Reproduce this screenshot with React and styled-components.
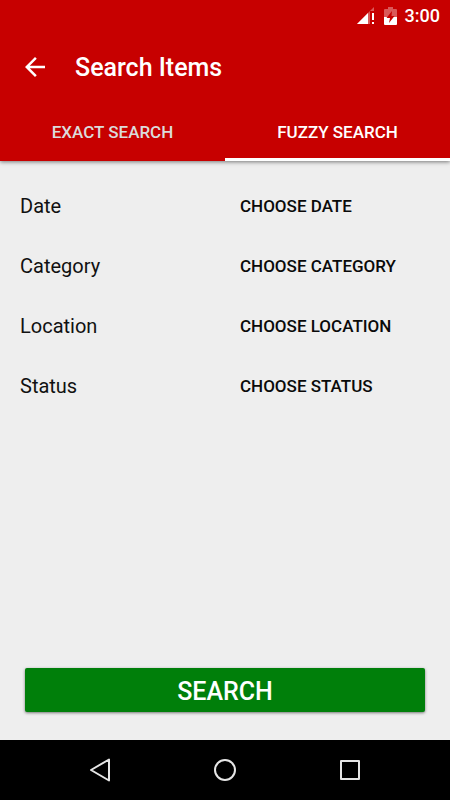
import React, { useState } from 'react';
import styled, { createGlobalStyle } from 'styled-components';

const GlobalStyle = createGlobalStyle`
  * {
    box-sizing: border-box;
  }

  body {
    margin: 0;
    background-color: #eeeeee;
    font-family: Roboto, "Liberation Sans", sans-serif;
  }

  button {
    border: none;
    padding: 0;
    background-color: transparent;
    font-family: inherit;
    cursor: pointer;
  }

  svg {
    display: block;
  }
`;

const Screen = styled.div`
  display: flex;
  flex-direction: column;
  min-height: 100vh;
`;

const Header = styled.header`
  position: relative;
  background-color: #c70000;
  color: #fff;
  box-shadow: 0 1px 4px rgba(0, 0, 0, 0.5);
`;

const StatusBar = styled.div`
  display: flex;
  justify-content: flex-end;
  align-items: center;
  height: 32px;
  padding: 0 10px;
`;

const Clock = styled.time`
  margin-left: 8px;
  font-size: 18px;
  line-height: 32px;
  font-weight: 500;
`;

const BatteryIcon = styled.svg`
  margin-left: 9px;
`;

const Toolbar = styled.div`
  display: flex;
  align-items: center;
  height: 70px;
  padding: 0 20px;
  gap: 25px;
`;

const Title = styled.h1`
  margin: 0;
  padding-top: 2px;
  font-size: 25px;
  line-height: 30px;
  font-weight: 500;
`;

const Tabs = styled.div`
  display: flex;
`;

const Tab = styled.button`
  flex: 1;
  height: 59px;
  padding-top: 3px;
  border-bottom: 3px solid ${({ $active }) => ($active ? '#fff' : 'transparent')};
  color: ${({ $active }) => ($active ? '#fff' : '#dbdbdb')};
  font-size: 17px;
  line-height: 20px;
  font-weight: 500;
`;

const Form = styled.main`
  flex: 1;
  display: flex;
  flex-direction: column;
  padding: 15px 0 28px;
`;

const Row = styled.div`
  display: grid;
  grid-template-columns: 1fr 1fr;
  align-items: center;
  height: 60px;
`;

const Label = styled.label`
  padding-left: 20px;
  color: #111;
  font-size: 20px;
  line-height: 24px;
`;

const ChooseButton = styled.button`
  height: 60px;
  padding-left: 15px;
  color: #0a0a0a;
  font-size: 17px;
  line-height: 20px;
  font-weight: 500;
  text-align: left;
`;

const SearchButton = styled.button`
  height: 44px;
  margin: auto 25px 0;
  padding-top: 3px;
  border-radius: 2px;
  background-color: #007f0a;
  box-shadow: 0 1px 3px rgba(0, 0, 0, 0.5);
  color: #fff;
  font-size: 25px;
  line-height: 30px;
  font-weight: 500;
`;

const NavBar = styled.nav`
  display: flex;
  justify-content: center;
  gap: 65px;
  background-color: #000;
`;

const NavButton = styled.button`
  display: flex;
  justify-content: center;
  align-items: center;
  width: 60px;
  height: 60px;
`;

const tabs = ['EXACT SEARCH', 'FUZZY SEARCH'];
const fields = ['Date', 'Category', 'Location', 'Status'];

function NavIcon({ children }) {
  return (
    <svg width="30" height="30" viewBox="0 0 30 30" fill="none" stroke="#e6e6e6" strokeWidth="2" strokeLinejoin="round">
      {children}
    </svg>
  );
}

function App() {
  const [activeTab, setActiveTab] = useState('FUZZY SEARCH');

  return (
    <Screen>
      <GlobalStyle />
      <Header>
        <StatusBar>
          <svg width="19" height="18" viewBox="0 0 19 18" aria-hidden="true">
            <path d="M1 17L18 0V4H14V17Z" fill="#fff" fillOpacity="0.35" />
            <path d="M1 17L12 6V17Z" fill="#fff" />
            <path d="M16 6H18V13H16ZM16 15H18V17H16Z" fill="#fff" />
          </svg>
          <BatteryIcon width="13" height="18" viewBox="0 0 13 18" aria-hidden="true">
            <path d="M4 0H9V2H12Q13 2 13 3V10H0V3Q0 2 1 2H4Z" fill="#fff" fillOpacity="0.35" />
            <path d="M0 10H13V17Q13 18 12 18H1Q0 18 0 17Z" fill="#fff" />
            <path d="M8 4L2.5 11H6L5 16L10.5 9H7.5Z" fill="#c70000" />
          </BatteryIcon>
          <Clock>3:00</Clock>
        </StatusBar>
        <Toolbar>
          <button type="button" aria-label="Back">
            <svg width="30" height="30" viewBox="0 0 24 24" fill="#fff">
              <path d="M20 11H7.83l5.59-5.59L12 4l-8 8 8 8 1.41-1.41L7.83 13H20v-2z" />
            </svg>
          </button>
          <Title>Search Items</Title>
        </Toolbar>
        <Tabs role="tablist">
          {tabs.map((tab) => (
            <Tab
              key={tab}
              type="button"
              role="tab"
              aria-selected={tab === activeTab}
              $active={tab === activeTab}
              onClick={() => setActiveTab(tab)}
            >
              {tab}
            </Tab>
          ))}
        </Tabs>
      </Header>
      <Form>
        {fields.map((field) => (
          <Row key={field}>
            <Label htmlFor={field}>{field}</Label>
            <ChooseButton type="button" id={field}>
              CHOOSE {field.toUpperCase()}
            </ChooseButton>
          </Row>
        ))}
        <SearchButton type="button">SEARCH</SearchButton>
      </Form>
      <NavBar>
        <NavButton type="button" aria-label="Back">
          <NavIcon>
            <path d="M6 15L24 4.5V25.5Z" />
          </NavIcon>
        </NavButton>
        <NavButton type="button" aria-label="Home">
          <NavIcon>
            <circle cx="15" cy="15" r="10" />
          </NavIcon>
        </NavButton>
        <NavButton type="button" aria-label="Recent apps">
          <NavIcon>
            <rect x="6" y="6" width="18" height="18" />
          </NavIcon>
        </NavButton>
      </NavBar>
    </Screen>
  );
}

export default App;
